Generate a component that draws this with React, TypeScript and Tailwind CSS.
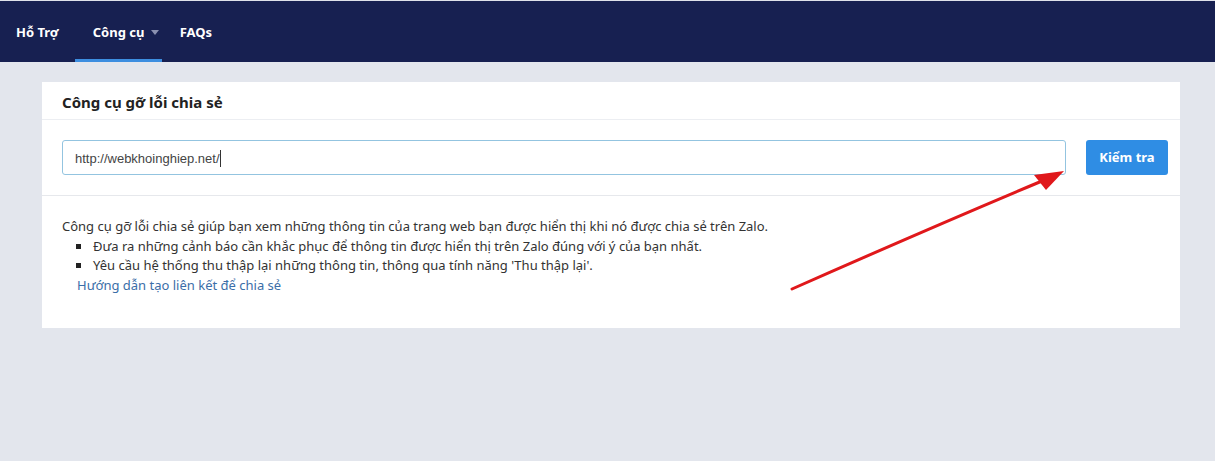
import React from "react";

export default function App() {
  const font = { fontFamily: '"Noto Sans", "Open Sans", sans-serif' };
  return (
    <div className="w-[1215px] h-[461px] bg-[#e3e6ed] overflow-hidden relative" style={font}>
      <header className="h-[62px] bg-[#172051] border-t border-[#dfe2ea] flex items-stretch">
        <nav className="flex items-stretch text-[13px] font-bold text-white whitespace-nowrap">
          <div className="flex items-center pl-[16px] pr-[16px] pt-[2px]">Hỗ Trợ</div>
          <div className="flex items-center w-[87px] shrink-0 pl-[18px] border-b-[3px] border-[#3d8ee0] pt-[5px]">
            <span>Công cụ</span>
            <span className="ml-[7px] inline-block w-0 h-0 shrink-0 border-l-[4px] border-r-[4px] border-t-[5px] border-l-transparent border-r-transparent border-t-[#8a90b0]"></span>
          </div>
          <div className="flex items-center pl-[18px] pt-[2px]">FAQs</div>
        </nav>
      </header>

      <main className="pt-[20px] pl-[42px]">
        <section className="w-[1138px] h-[246px] bg-white">
          <div className="h-[38px] border-b border-[#eceef2] flex items-center px-[20px] pt-[4px]">
            <h1 className="text-[15px] font-bold text-[#222]">Công cụ gỡ lỗi chia sẻ</h1>
          </div>
          <div className="flex items-center gap-[20px] px-[20px] pt-[20px] pb-[20px] border-b border-[#e6e8ec] pr-[12px]">
            <div className="flex-1 h-[35px] border border-[#93c4e0] rounded-[3px] flex items-center px-[12px] pt-[2px] text-[13px] text-[#444]" style={{ fontFamily: '"Liberation Sans", Arial, sans-serif' }}>
              http://webkhoinghiep.net/<span className="inline-block w-px h-[17px] bg-[#333]"></span>
            </div>
            <button className="w-[82px] h-[35px] rounded-[3px] bg-[#2f8de4] text-white text-[13px] font-bold">Kiểm tra</button>
          </div>
          <div className="px-[20px] pt-[21px] text-[13px] leading-[19.5px] text-[#333]">
            <p>Công cụ gỡ lỗi chia sẻ giúp bạn xem những thông tin của trang web bạn được hiển thị khi nó được chia sẻ trên Zalo.</p>
            <ul className="pl-[14px]">
              <li className="flex items-center">
                <span className="inline-block w-[5px] h-[5px] bg-[#222] mr-[12px]"></span>
                Đưa ra những cảnh báo cần khắc phục để thông tin được hiển thị trên Zalo đúng với ý của bạn nhất.
              </li>
              <li className="flex items-center">
                <span className="inline-block w-[5px] h-[5px] bg-[#222] mr-[12px]"></span>
                Yêu cầu hệ thống thu thập lại những thông tin, thông qua tính năng 'Thu thập lại'.
              </li>
            </ul>
            <a className="block pl-[15px] text-[#3b6ea8]">Hướng dẫn tạo liên kết để chia sẻ</a>
          </div>
        </section>
      </main>

      <svg className="absolute left-0 top-0 pointer-events-none" width="1215" height="461">
        <path d="M792 289 Q 930 228 1042 181" stroke="#e0181b" strokeWidth="3" strokeLinecap="round" fill="none" />
        <polygon points="1064,171 1034,175 1046,190" fill="#e0181b" />
      </svg>
    </div>
  );
}
